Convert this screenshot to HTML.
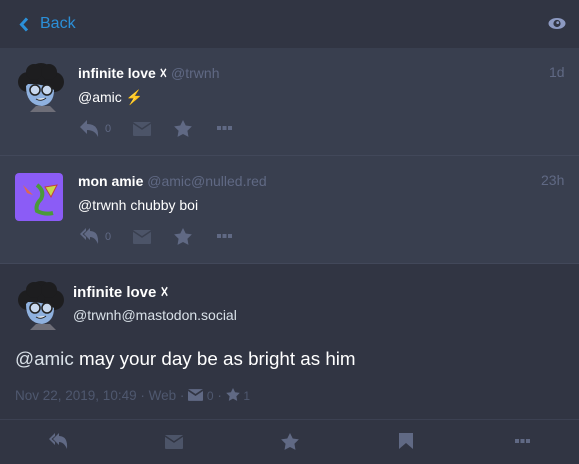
<!DOCTYPE html>
<html><head><meta charset="utf-8"><style>
*{margin:0;padding:0;box-sizing:border-box}
body{width:579px;height:464px;overflow:hidden;background:#313543;font-family:"Liberation Sans","Noto Sans CJK JP",sans-serif;position:relative;color:#fff}
.a{position:absolute}
.hdr{left:0;top:0;width:579px;height:48px;background:#313543}
.st{left:0;width:579px;background:#393f4f;border-bottom:1px solid #42485a}
.name{font-weight:bold;font-size:14px;color:#fff;white-space:nowrap}
.name span{font-weight:normal;color:#606984}
.txt{font-size:14px;color:#fff}
.time{font-size:14px;color:#606984}
.cnt{font-size:11px;color:#606984}
svg{display:block}
</style></head><body>
<div class="a hdr"></div>
<svg class="a" style="left:19px;top:17px" width="10" height="15" viewBox="0 0 10 15"><path d="M8 1.5L2.5 7.5L8 13.5" stroke="#2b90d9" stroke-width="3" fill="none"/></svg>
<div class="a" style="left:40px;top:15px;font-size:16px;color:#2b90d9">Back</div>
<svg class="a" style="left:548px;top:17px" width="18" height="13" viewBox="0 0 18 13"><ellipse cx="9" cy="6.5" rx="8.5" ry="5.5" fill="#8d9ac2"/><circle cx="9" cy="6.5" r="3.6" fill="#313543"/><circle cx="9.7" cy="5.6" r="1.4" fill="#8d9ac2"/></svg>

<div class="a st" style="top:48px;height:108px"></div>
<div class="a st" style="top:156px;height:108px"></div>

<svg class="a" style="left:16px;top:62px" width="50" height="50" viewBox="0 0 50 50"><circle cx="25" cy="14" r="13" fill="#1d1d1f"/><circle cx="12" cy="20" r="10" fill="#1d1d1f"/><circle cx="38" cy="20" r="10" fill="#1d1d1f"/><circle cx="18" cy="10" r="8" fill="#1d1d1f"/><circle cx="33" cy="10" r="8" fill="#1d1d1f"/><path d="M10 24 Q10 43 26 44 Q38 42 38 28 Q30 22 12 22Z" fill="#8fb1df"/><circle cx="19" cy="28" r="5" fill="#c8d8ee" stroke="#222" stroke-width="1.5"/><circle cx="31" cy="28" r="5" fill="#c8d8ee" stroke="#222" stroke-width="1.5"/><path d="M20 37 Q25 40 30 36" stroke="#222" fill="#fff"/><path d="M14 50 L20 44 L34 44 L40 50Z" fill="#6e6e78"/></svg>
<div class="a name" style="left:78px;top:65px">infinite love ☓ <span>@trwnh</span></div>
<div class="a time" style="left:549px;top:64px">1d</div>
<div class="a txt" style="left:78px;top:89px">@amic <span style="color:#f3d84a">⚡</span></div>

<div class="a" style="left:15px;top:173px;width:48px;height:48px;border-radius:4px;background:#8b5cf6"></div>
<svg class="a" style="left:15px;top:173px" width="48" height="48" viewBox="0 0 48 48"><path d="M8 12 L18 22 L12 20Z" fill="#e06850"/><path d="M30 14 L42 12 L36 24Z" fill="#c8d84a" stroke="#c04040"/><path d="M22 12 Q30 18 26 26 Q20 32 22 38 Q30 42 38 40" stroke="#4a9a3a" stroke-width="4" fill="none"/></svg>
<div class="a name" style="left:78px;top:173px">mon amie <span>@amic@nulled.red</span></div>
<div class="a time" style="left:541px;top:172px">23h</div>
<div class="a txt" style="left:78px;top:197px">@trwnh chubby boi</div>

<svg class="a" style="left:80px;top:120px" width="20" height="18" viewBox="0 0 20 18"><path d="M0 7 L7 0 V4 Q19 4 18 17 Q15 10 7 10 V14Z" fill="#606984"/></svg>
<div class="a cnt" style="left:105px;top:123px">0</div>
<svg class="a" style="left:133px;top:122px" width="18" height="14" viewBox="0 0 18 14"><rect width="18" height="14" rx="1" fill="#4c5468"/><path d="M0 1 L9 7 L18 1" stroke="#393f4f" stroke-width="1.5" fill="none"/></svg>
<svg class="a" style="left:174px;top:120px" width="18" height="17" viewBox="0 0 24 23"><path d="M12 0l3.7 7.5 8.3 1.2-6 5.8 1.4 8.3L12 18.9 4.6 22.8 6 14.5 0 8.7l8.3-1.2z" fill="#606984"/></svg>
<svg class="a" style="left:217px;top:126px" width="15" height="5"><rect width="4" height="4" fill="#606984"/><rect x="5.5" width="4" height="4" fill="#606984"/><rect x="11" width="4" height="4" fill="#606984"/></svg>

<svg class="a" style="left:80px;top:228px" width="20" height="18" viewBox="0 0 20 18"><path d="M0 6 L6 0 V3 L2.5 6 L6 9 V12Z M4 6 L10 0 V3 Q19 3 18 16 Q15 9 10 9 V12Z" fill="#606984"/></svg>
<div class="a cnt" style="left:105px;top:231px">0</div>
<svg class="a" style="left:133px;top:230px" width="18" height="14" viewBox="0 0 18 14"><rect width="18" height="14" rx="1" fill="#4c5468"/><path d="M0 1 L9 7 L18 1" stroke="#393f4f" stroke-width="1.5" fill="none"/></svg>
<svg class="a" style="left:174px;top:228px" width="18" height="17" viewBox="0 0 24 23"><path d="M12 0l3.7 7.5 8.3 1.2-6 5.8 1.4 8.3L12 18.9 4.6 22.8 6 14.5 0 8.7l8.3-1.2z" fill="#606984"/></svg>
<svg class="a" style="left:217px;top:234px" width="15" height="5"><rect width="4" height="4" fill="#606984"/><rect x="5.5" width="4" height="4" fill="#606984"/><rect x="11" width="4" height="4" fill="#606984"/></svg>

<svg class="a" style="left:16px;top:280px" width="50" height="50" viewBox="0 0 50 50"><circle cx="25" cy="14" r="13" fill="#1d1d1f"/><circle cx="12" cy="20" r="10" fill="#1d1d1f"/><circle cx="38" cy="20" r="10" fill="#1d1d1f"/><circle cx="18" cy="10" r="8" fill="#1d1d1f"/><circle cx="33" cy="10" r="8" fill="#1d1d1f"/><path d="M10 24 Q10 43 26 44 Q38 42 38 28 Q30 22 12 22Z" fill="#8fb1df"/><circle cx="19" cy="28" r="5" fill="#c8d8ee" stroke="#222" stroke-width="1.5"/><circle cx="31" cy="28" r="5" fill="#c8d8ee" stroke="#222" stroke-width="1.5"/><path d="M20 37 Q25 40 30 36" stroke="#222" fill="#fff"/><path d="M14 50 L20 44 L34 44 L40 50Z" fill="#6e6e78"/></svg>
<div class="a name" style="left:73px;top:283px;font-size:15px">infinite love ☓</div>
<div class="a" style="left:73px;top:307px;font-size:14px;color:#d9e1e8">@trwnh@mastodon.social</div>
<div class="a" style="left:15px;top:348px;font-size:18.8px;color:#fff;white-space:nowrap"><span style="color:#d9e1e8">@amic</span> may your day be as bright as him</div>
<div class="a" style="left:15px;top:388px;font-size:13.5px;color:#4f586f;white-space:nowrap">Nov 22, 2019, 10:49 · Web · <svg style="display:inline;vertical-align:-1px" width="15" height="12" viewBox="0 0 18 14"><rect width="18" height="14" rx="1" fill="#606984"/><path d="M0 1 L9 7 L18 1" stroke="#313543" stroke-width="2" fill="none"/></svg> <span style="font-size:12px">0</span> · <svg style="display:inline;vertical-align:-1px" width="14" height="13" viewBox="0 0 24 23"><path d="M12 0l3.7 7.5 8.3 1.2-6 5.8 1.4 8.3L12 18.9 4.6 22.8 6 14.5 0 8.7l8.3-1.2z" fill="#606984"/></svg> <span style="font-size:12px">1</span></div>
<div class="a" style="left:0;top:419px;width:579px;height:1px;background:#3c4152"></div>
<svg class="a" style="left:49px;top:433px" width="20" height="17" viewBox="0 0 20 17"><path d="M0 6 L6 0 V3 L2.5 6 L6 9 V12Z M4 6 L10 0 V3 Q19 3 18 16 Q15 9 10 9 V12Z" fill="#606984"/></svg>
<svg class="a" style="left:165px;top:435px" width="18" height="14" viewBox="0 0 18 14"><rect width="18" height="14" rx="1" fill="#4c5468"/><path d="M0 1 L9 7 L18 1" stroke="#313543" stroke-width="1.5" fill="none"/></svg>
<svg class="a" style="left:281px;top:433px" width="18" height="17" viewBox="0 0 24 23"><path d="M12 0l3.7 7.5 8.3 1.2-6 5.8 1.4 8.3L12 18.9 4.6 22.8 6 14.5 0 8.7l8.3-1.2z" fill="#606984"/></svg>
<svg class="a" style="left:399px;top:433px" width="14" height="16" viewBox="0 0 14 16"><path d="M0 0H14V16L7 10L0 16Z" fill="#606984"/></svg>
<svg class="a" style="left:515px;top:439px" width="15" height="5"><rect width="4" height="4" fill="#606984"/><rect x="5.5" width="4" height="4" fill="#606984"/><rect x="11" width="4" height="4" fill="#606984"/></svg>
</body></html>
